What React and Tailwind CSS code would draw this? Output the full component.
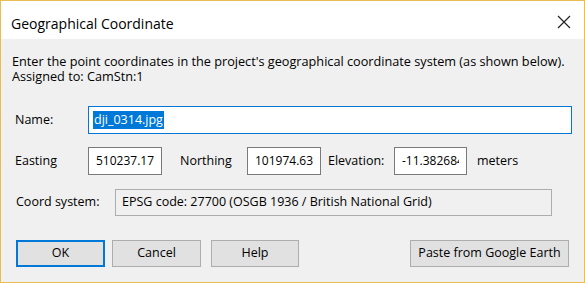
export default function App() {
  const font = { fontFamily: '"Open Sans", "Noto Sans", sans-serif' };
  return (
    <div
      className="w-[585px] h-[283px] border border-[#e9bd52] flex flex-col overflow-hidden text-[#000]"
      style={font}
    >
      <div className="h-[38px] bg-white flex items-start justify-between pl-[10px] pr-[13px] shrink-0">
        <span className="mt-[16px] text-[14px] leading-none text-black">Geographical Coordinate</span>
        <svg width="14" height="14" viewBox="0 0 14 14" className="mt-[14px]">
          <path d="M1 1 L13 13 M13 1 L1 13" stroke="#222" strokeWidth="1.2" fill="none" />
        </svg>
      </div>
      <div className="flex-1 bg-[#f0f0f0] flex flex-col pl-[11px] pr-[12px] pt-[15px] text-[12.5px]">
        <div className="leading-[15px] whitespace-nowrap text-[12.7px]">
          <div>Enter the point coordinates in the project's geographical coordinate system (as shown below).</div>
          <div>Assigned to: CamStn:1</div>
        </div>
        <div className="flex items-center mt-[22px] h-[28px]">
          <span className="w-[76px] pl-[3px]">Name:</span>
          <div className="w-[484px] h-[28px] bg-white border border-[#0078d7] flex items-center pl-[4px]">
            <span className="bg-[#0078d7] text-white leading-[18px] px-[1px]">dji_0314.jpg</span>
          </div>
        </div>
        <div className="flex items-center mt-[13px] h-[28px]">
          <span className="w-[76px] pl-[3px]">Easting</span>
          <div className="w-[74px] h-[28px] bg-white border border-[#7a7a7a] flex items-center pl-[7px] pr-[3px] text-[12px]">
            <div className="overflow-hidden whitespace-nowrap">510237.17</div>
          </div>
          <span className="ml-[18px] w-[67px]">Northing</span>
          <div className="w-[74px] h-[28px] bg-white border border-[#7a7a7a] flex items-center pl-[7px] pr-[2px] text-[12px]">
            <div className="overflow-hidden whitespace-nowrap">101974.63</div>
          </div>
          <span className="ml-[7px] w-[66px]">Elevation:</span>
          <div className="w-[73px] h-[28px] bg-white border border-[#7a7a7a] flex items-center pl-[7px] pr-[7px] text-[12px]">
            <div className="overflow-hidden whitespace-nowrap">-11.3826849</div>
          </div>
          <span className="ml-[10px]">meters</span>
        </div>
        <div className="flex items-center mt-[14px] h-[27px]">
          <span className="w-[103px] pl-[4px]">Coord system:</span>
          <div className="w-[437px] h-[27px] bg-[#f0f0f0] border border-[#adadad] flex items-center pl-[6px] whitespace-nowrap">
            EPSG code: 27700 (OSGB 1936 / British National Grid)
          </div>
        </div>
        <div className="flex items-center mt-[24px] pl-[4px]">
          <button className="w-[89px] h-[27px] bg-[#e1e1e1] border-2 border-[#0078d7]">OK</button>
          <button className="ml-[7px] w-[89px] h-[27px] bg-[#e1e1e1] border border-[#adadad]">Cancel</button>
          <button className="ml-[10px] w-[88px] h-[27px] bg-[#e1e1e1] border border-[#adadad]">Help</button>
          <button className="ml-auto mr-[3px] w-[159px] h-[27px] bg-[#e1e1e1] border border-[#adadad]">Paste from Google Earth</button>
        </div>
      </div>
    </div>
  );
}
